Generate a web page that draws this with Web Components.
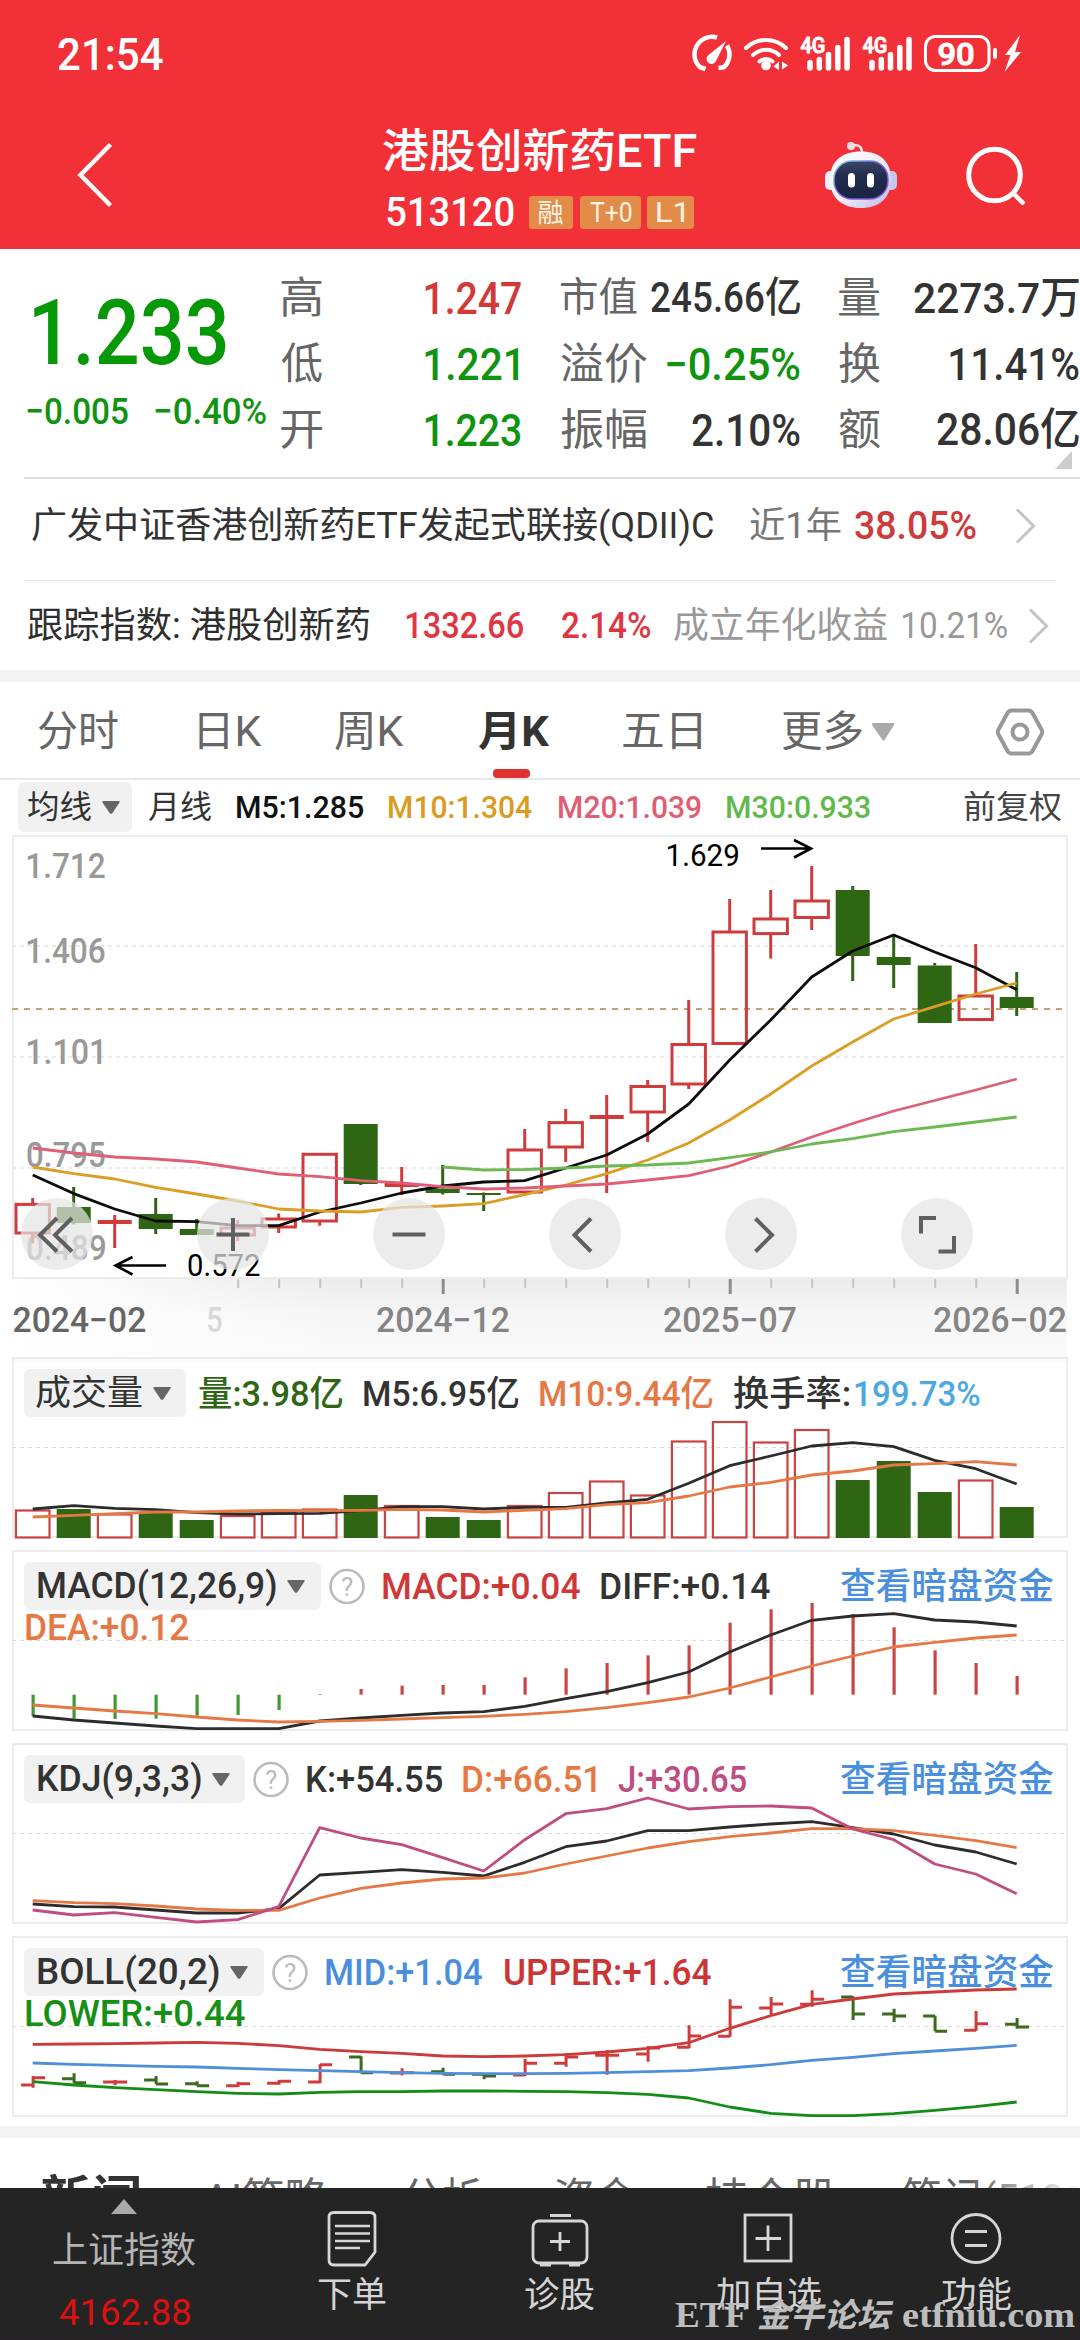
<!DOCTYPE html>
<html lang="zh-CN">
<head>
<meta charset="utf-8">
<title>港股创新药ETF 513120</title>
<style>
html,body{margin:0;padding:0;background:#fff}
body{width:1080px;height:2340px;overflow:hidden;font-family:Roboto,"Noto Sans CJK SC",sans-serif}
</style>
</head>
<body>
<quote-app></quote-app>
<script>
const FONT = 'Roboto,"Noto Sans CJK SC",sans-serif';
const ctx = document.createElement('canvas').getContext('2d');
function ink(text, size, weight, font = FONT) {
  ctx.font = `${weight} ${size}px ${font}`;
  const m = ctx.measureText(text);
  return { l: -m.actualBoundingBoxLeft, w: m.actualBoundingBoxLeft + m.actualBoundingBoxRight };
}
/* SVG text whose ink spans x..x+w, vertically centred on cy */
function label(text, x, w, cy, size, color, weight = 400) {
  const k = ink(text, size, weight), s = w / k.w;
  return `<text transform="translate(${x - k.l * s} ${cy + size * .355}) scale(${s} 1)" font-family='${FONT}' font-size="${size}" font-weight="${weight}" fill="${color}">${text}</text>`;
}
function define(name, html, extra) {
  customElements.define(name, class extends HTMLElement {
    constructor() {
      super();
      const t = document.createElement('template');
      t.innerHTML = html;
      this.attachShadow({ mode: 'open' }).append(t.content.cloneNode(true));
    }
    connectedCallback() { if (extra) extra(this, this.shadowRoot); }
  });
}

/* Text fitted to a given ink width: w, size s, weight b, colour c, left margin m */
define('fit-text', `<style>:host{display:block;flex:none;white-space:pre}span{display:inline-block;transform-origin:0 50%;white-space:pre}</style><span><slot></slot></span>`, (el, root) => {
  const a = n => el.getAttribute(n);
  const s = +a('s'), b = a('b') || 400, w = +a('w'), f = a('f') || FONT;
  const k = ink(el.textContent, s, b, f);
  const r = w / k.w;
  el.style.cssText += `;width:${w}px;height:${s}px;line-height:${s}px;font-size:${s}px;font-weight:${b};color:${a('c') || '#333'};margin-left:${a('m') || 0}px;font-family:${f}`;
  root.querySelector('span').style.transform = `translateX(${-k.l * r}px) scaleX(${r})`;
});

define('status-bar', `<style>:host{display:flex;height:108px;align-items:center}svg{margin-left:527px;display:block}</style>
<fit-text s="45" w="105" m="58" b="500" c="#fff">21:54</fit-text><svg width="340" height="108" viewBox="690 0 340 108" fill="none" stroke="#fff"></svg>`, (el, root) => {
  let h = `<path d="M701 68 A17.5 17.5 0 0 1 717 37.6M727 45.500 A17.5 17.5 0 0 1 723 68M699.500 67l6 2M724.500 67l-6 1" stroke-width="4.500"/><path d="M726 41l-9.500 19a5 5 0 1 1-8-5z" fill="#fff" stroke="none"/>
  <path d="M746 48a29 29 0 0 1 40 0M753 55a19 19 0 0 1 26 0M759.500 61.500a10 10 0 0 1 13 0" stroke-width="4" stroke-linecap="round"/><circle cx="766" cy="65.500" r="4.800" fill="#fff" stroke="none"/><path d="M779 61.500v8.500l-5.500-3.500zM782 61v9M782 61.500l6 4-6 4z" fill="#fff" stroke="none"/>`;
  for (const o of [0, 62]) {
    h += label('4G', 800.5 + o, 24, 45, 22, '#fff', 500);
    [[810, 60], [819.3, 57], [828.5, 52], [837.8, 45], [847, 37]].forEach(p => h += `<path d="M${p[0] + o} ${p[1] + 2.5}V68" stroke-width="5.500" stroke-linecap="round"/>`);
  }
  h += `<rect x="925.500" y="36.500" width="63.500" height="34" rx="10" stroke-width="3"/><rect x="993" y="48" width="4" height="11" rx="2" fill="#fff" stroke="none"/><path d="M1020 35l-15 20h5.500l-6 17 16.500-20h-6z" fill="#fff" stroke="none"/>` + label('90', 938.5, 35, 53.5, 32, '#fff', 500);
  root.querySelector('svg').innerHTML = h;
});

define('nav-tag', `<style>:host{display:flex;height:33px;align-items:center;justify-content:center;background:#e38b48;border-radius:3px}</style><slot></slot>`);

define('nav-header', `<style>:host{display:flex;height:133px;padding-bottom:8px;align-items:center}svg{display:block;flex:none}
.t{width:314px;margin-left:270px;align-self:flex-start;padding-top:20px}.c{display:flex;align-items:center;margin-top:18px}</style>
<svg style="margin-left:77px" width="36" height="66" viewBox="0 0 36 66"><path d="M33.500 2.500L3.500 33l30 30.500" fill="none" stroke="#fff" stroke-width="4.500"/></svg>
<div class="t"><fit-text s="46" w="314" b="500" c="#fff">港股创新药ETF</fit-text>
<div class="c"><fit-text s="41" w="127" m="4" b="500" c="#fff">513120</fit-text>
<nav-tag style="width:44px;margin-left:15px"><fit-text s="26" w="25" c="#fff4e6">融</fit-text></nav-tag>
<nav-tag style="width:61px;margin-left:7px"><fit-text s="28" w="42" c="#fff4e6">T+0</fit-text></nav-tag>
<nav-tag style="width:47px;margin-left:6px"><fit-text s="28" w="27" c="#fff4e6">L1</fit-text></nav-tag></div></div>
<svg style="margin-left:128px" width="72" height="68" viewBox="0 0 72 68"><defs><linearGradient id="g" x1="0" y1="0" x2="1" y2="1"><stop offset="0" stop-color="#fff"/><stop offset=".55" stop-color="#efecfb"/><stop offset="1" stop-color="#b9b5e6"/></linearGradient><linearGradient id="h" x1="0" y1="0" x2="0" y2="1"><stop offset="0" stop-color="#3a4668"/><stop offset=".4" stop-color="#222c4c"/><stop offset="1" stop-color="#1c2342"/></linearGradient><linearGradient id="r" x1="0" y1="0" x2="1" y2="1"><stop offset="0" stop-color="#8fd3ea"/><stop offset=".5" stop-color="#6d63d8"/><stop offset="1" stop-color="#8a55e0"/></linearGradient></defs>
<path d="M28 4.500c7-1 9 2 9 8" fill="none" stroke="#f7e3ea" stroke-width="2.600"/><circle cx="26" cy="5" r="4" fill="#f5dde6"/>
<rect x="0" y="30" width="12" height="19" rx="5" fill="#f2effc"/><rect x="60" y="30" width="12" height="19" rx="5" fill="#c9c6ee"/>
<path d="M36 10.500c19 0 30 10 30 28S55 67 36 67 5 57 5 38.500s12-28 31-28z" fill="url(#g)"/>
<rect x="9" y="20" width="54" height="38" rx="18" fill="url(#h)" stroke="url(#r)" stroke-width="1.500"/><rect x="23" y="32" width="7" height="14.500" rx="3.500" fill="#fff"/><rect x="42" y="32" width="7" height="14.500" rx="3.500" fill="#fff"/></svg>
<svg style="margin-left:69px" width="62" height="60" viewBox="0 0 62 60" fill="none" stroke="#fff" stroke-width="5"><circle cx="28.500" cy="30" r="25.800"/><path d="M47.500 48.500L58 59" stroke-width="4.500"/></svg>`);

define('stat-cell', `<style>:host{display:flex;flex:none;align-items:center;justify-content:space-between;height:66px}</style><slot></slot>`);

define('quote-board', `<style>:host{display:flex;height:228px;position:relative}
.l{width:281px;flex:none}.p{padding-top:40px}.d{display:flex;margin-top:14px}
.g{display:grid;grid-template-columns:240px 239px 240px;column-gap:39.500px;grid-auto-rows:66px;padding-top:16px}
svg{position:absolute;left:1055px;top:202px}</style>
<div class="l"><div class="p"><fit-text s="90" w="192" m="34" b="500" c="#069806">1.233</fit-text></div>
<div class="d"><fit-text s="37" w="101" m="27" c="#109310" b="500">−0.005</fit-text><fit-text s="37" w="111" m="27" c="#109310" b="500">−0.40%</fit-text></div></div>
<div class="g">
<stat-cell><fit-text s="43" w="41" c="#666">高</fit-text><fit-text s="45" w="96" c="#d23a3a" b="500">1.247</fit-text></stat-cell>
<stat-cell><fit-text s="40" w="76" c="#666">市值</fit-text><fit-text s="42" w="149" c="#333" b="500">245.66亿</fit-text></stat-cell>
<stat-cell><fit-text s="43" w="41" c="#666">量</fit-text><fit-text s="43" w="165" c="#333" b="500">2273.7万</fit-text></stat-cell>
<stat-cell><fit-text s="43" w="41" c="#666">低</fit-text><fit-text s="45" w="93" c="#109310" b="500" style="margin-right:3px">1.221</fit-text></stat-cell>
<stat-cell><fit-text s="43" w="86" c="#666">溢价</fit-text><fit-text s="45" w="133" c="#109310" b="500">−0.25%</fit-text></stat-cell>
<stat-cell><fit-text s="43" w="41" c="#666">换</fit-text><fit-text s="45" w="129" c="#333" b="500">11.41%</fit-text></stat-cell>
<stat-cell><fit-text s="43" w="41" c="#666">开</fit-text><fit-text s="45" w="96" c="#109310" b="500">1.223</fit-text></stat-cell>
<stat-cell><fit-text s="43" w="85" c="#666">振幅</fit-text><fit-text s="45" w="108" c="#333" b="500">2.10%</fit-text></stat-cell>
<stat-cell><fit-text s="43" w="41" c="#666">额</fit-text><fit-text s="44" w="142" c="#333" b="500">28.06亿</fit-text></stat-cell>
</div><svg width="17" height="18"><path d="M17 0v18H0z" fill="#ccc"/></svg>`);

define('row-chevron', `<style>:host{display:block;flex:none}svg{display:block}</style><svg width="21" height="36" viewBox="0 0 21 36"><path d="M2 1.500L18.500 18 2 34.500" fill="none" stroke="#c4c4c4" stroke-width="3"/></svg>`);

define('fund-rows', `<style>.a,.b{display:flex;align-items:center}.a{height:94px;padding-bottom:7px}.b{height:89px}.h{height:2px;margin-left:24px;background:#dedede}.i{margin-right:24px;height:1px;background:#e4e4e4}:host{display:block}.s{height:12px;background:#f4f4f4}</style>
<div class="h"></div>
<div class="a"><fit-text s="36" w="681" m="32">广发中证香港创新药ETF发起式联接(QDII)C</fit-text><fit-text s="36" w="91" m="37" c="#777">近1年</fit-text><fit-text s="38" w="121" m="14" c="#cf3a3a" b="500">38.05%</fit-text><row-chevron style="margin-left:39px"></row-chevron></div>
<div class="h i"></div>
<div class="b"><fit-text s="36" w="341" m="28" c="#2e2e2e">跟踪指数: 港股创新药</fit-text><fit-text s="36" w="117" m="37" c="#e03543" b="500">1332.66</fit-text><fit-text s="36" w="88" m="39" c="#e03543" b="500">2.14%</fit-text><fit-text s="36" w="213" m="24" c="#999">成立年化收益</fit-text><fit-text s="36" w="104" m="16" c="#999">10.21%</fit-text><row-chevron style="margin-left:21px"></row-chevron></div>
<div class="s"></div>`);

define('k-tabs', `<style>:host{display:flex;height:93px;padding-top:3px;align-items:center;border-bottom:2px solid #e8e8e8;position:relative}svg{display:block;flex:none}i{position:absolute;left:493px;top:87px;width:37px;height:9px;border-radius:4px;background:#e03131}</style>
<fit-text s="42" w="80" m="38" c="#666">分时</fit-text><fit-text s="42" w="63" m="81" c="#666">日K</fit-text><fit-text s="42" w="69" m="73" c="#666">周K</fit-text><fit-text s="42" w="71" m="74" b="700" c="#333">月K</fit-text><fit-text s="42" w="78" m="74" c="#666">五日</fit-text><fit-text s="42" w="80" m="81" c="#666">更多</fit-text>
<svg style="margin-left:10px" width="23" height="18"><path d="M2 0h19q2 0 1 2L12.500 17q-1 1.500-2 0L0 2q-1-2 2-2z" fill="#aaa"/></svg>
<svg style="margin-left:100px" width="52" height="50" viewBox="0 0 52 50" fill="none" stroke="#999" stroke-width="4"><path d="M16.500 3.500h17q2.500 0 4 2.500l9 16.500q1.400 2.500 0 5l-9 16.500q-1.500 2.500-4 2.500h-17q-2.500 0-4-2.500l-9-16.500q-1.400-2.500 0-5l9-16.500q1.500-2.500 4-2.500z"/><circle cx="25" cy="25" r="7.500"/></svg><i></i>`);

define('drop-pill', `<style>:host{display:flex;flex:none;box-sizing:border-box;background:#f1f1f1;border-radius:6px;align-items:center;height:48px}svg{display:block;margin-left:11px}</style><slot></slot><svg width="18" height="13"><path d="M1.500 0h15q2 0 .8 1.700L10.500 12q-1.500 1.700-3 0L.7 1.700Q-.5 0 1.500 0z" fill="#666"/></svg>`);

define('ma-legend', `<style>:host{display:flex;height:54px;align-items:center}drop-pill{width:114px;height:50px;margin-left:18px;padding-left:10px}</style>
<drop-pill><fit-text s="32" w="63">均线</fit-text></drop-pill><fit-text s="32" w="63" m="16">月线</fit-text>
<fit-text s="32" w="126" m="26" b="500" c="#111">M5:1.285</fit-text><fit-text s="32" w="143" m="26" b="500" c="#da9b20">M10:1.304</fit-text><fit-text s="32" w="142" m="27" b="500" c="#e25c74">M20:1.039</fit-text><fit-text s="32" w="143" m="26" b="500" c="#62b94b">M30:0.933</fit-text><fit-text s="32" w="97" m="94" c="#444">前复权</fit-text>`);

const cx = i => 32.7 + 41 * i, RED = '#d03c3c', GREEN = '#2f6614';
const line = (v, c, w = 2.8, from = 0, f = y => y) => `<polyline fill="none" stroke="${c}" stroke-width="${w}" stroke-linejoin="round" points="${v.map((y, i) => cx(i + from).toFixed(1) + ',' + f(y).toFixed(1)).join(' ')}"/>`;

define('k-button', `<style>:host{display:block;width:72px;height:72px;border-radius:50%;background:rgba(229,229,229,.72)}svg{display:block}</style><svg width="72" height="72" fill="none" stroke="#606060" stroke-width="4"></svg>`, (el, root) => {
  root.querySelector('svg').innerHTML = `<path d="${{
    first: 'M36 20L19 37l17 16.500M51 20L34 37l17 16.500', plus: 'M36 20v33M19.500 36.500h33', minus: 'M19.500 36.500h33',
    prev: 'M42 20.500L25.500 37 42 53.500', next: 'M30.500 20.500L47 37 30.500 53.500', full: 'M35 20H20v15.500M53 38v15.500H37.500' }[el.getAttribute('kind')]}"/>`;
});

define('k-chart', `<style>:host{display:grid;height:523px}svg,.b{grid-area:1/1}svg{display:block}.b{display:flex;gap:104px;padding:364px 0 0 21px}</style>
<svg width="1080" height="523" viewBox="0 834 1080 523"></svg><div class="b"><k-button kind="first"></k-button><k-button kind="plus"></k-button><k-button kind="minus"></k-button><k-button kind="prev"></k-button><k-button kind="next"></k-button><k-button kind="full"></k-button></div>`, (el, root) => {
  let h = `<defs><linearGradient id="v" x1="0" y1="0" x2="0" y2="1"><stop offset="0" stop-color="#ebebeb"/><stop offset=".45" stop-color="#f6f6f6"/><stop offset="1" stop-color="#fafafa"/></linearGradient><linearGradient id="f" x1="0" y1="0" x2="1" y2="0"><stop offset="0" stop-color="#fff"/><stop offset="1" stop-color="#fff" stop-opacity="0"/></linearGradient></defs>
  <rect x="13" y="1279" width="1054" height="78" fill="url(#v)"/><rect x="12" y="1279" width="330" height="78" fill="url(#f)"/>
  <rect x="13" y="836" width="1054" height="442" fill="#fff" stroke="#ececec" stroke-width="2"/>`;
  for (const y of [946, 1057, 1168]) h += `<path d="M12 ${y}H1066" stroke="#ebebeb" stroke-width="2" stroke-dasharray="4 4"/>`;
  [['1.712', 865.5], ['1.406', 951], ['1.101', 1052], ['0.795', 1155], ['0.489', 1248]].forEach(l => h += label(l[0], 27, l[0] == '1.101' ? 75 : 78, l[1], 35, '#999', 500));
  h += `<path d="M12 1009H1066" stroke="#bfa575" stroke-width="2" stroke-dasharray="6 6"/>`;
  /* colour, high, body top, body bottom, low */
  const K = [['r',1198,1204.4,1233,1243.5],['g',1187,1207,1223,1224.6],['r',1215,1222,1222,1248],['g',1198,1214,1229,1234],['g',1219,1229,1235,1235],['r',1220,1228,1235,1241],['r',1213.5,1219,1227,1233],['r',1154,1154.3,1221,1225.7],['g',1124,1124,1184,1185],['r',1167,1185,1185,1195],['g',1165,1188.5,1193,1194.6],['g',1192.5,1193,1195,1211],['r',1129,1150,1192,1194.6],['r',1109,1122.6,1147,1162],['r',1095,1117,1117,1193],['r',1080,1086.5,1112,1142],['r',1000,1044.5,1084,1089],['r',899,932,1043.5,1043.5],['r',890,919,933.6,958.6],['r',866,901,917.5,930],['g',886,890,956,981],['g',935,957,965,988],['g',963,965.5,1023,1023],['r',944,996,1019.5,1019.5],['g',972,997,1008,1016]];
  K.forEach(([c, hi, t, b, lo], i) => {
    const x = cx(i), col = c == 'r' ? RED : GREEN;
    h += `<path d="M${x} ${hi}V${t}M${x} ${b}V${lo}" stroke="${col}" stroke-width="3"/>`;
    h += c == 'g' ? `<rect x="${x - 17}" y="${t}" width="34" height="${b - t}" fill="${col}"/>` : t == b ? `<path d="M${x - 17} ${t}h34" stroke="${col}" stroke-width="4"/>` : `<rect x="${x - 16.7}" y="${t}" width="33.400" height="${b - t}" fill="none" stroke="${col}" stroke-width="3"/>`;
  });
  h += line([1175,1193.6,1209,1221,1221.6,1225.7,1225.7,1212,1203,1193,1186,1182,1180.7,1168,1155,1134,1104,1060,1020,977,951,935,952,967.7,989.7], '#0c0c0c');
  h += line([1167,1173.6,1179,1187.4,1194,1201,1209,1211,1212,1207.4,1206,1203.7,1194.6,1185,1173.6,1160,1143,1120,1094,1066,1042,1019,1006.6,994,983], '#dc9d24');
  h += line([1148,1153,1157,1159,1162,1168,1174,1176.6,1180.7,1183,1186.7,1189,1188,1186,1184,1180,1175.6,1166,1152,1137,1123.5,1111,1100.5,1090,1079], '#de5f76');
  h += line([1167,1170,1169.5,1168,1166,1165,1163,1157.7,1152,1144,1138.7,1131.6,1127,1122,1117], '#6cb852', 2.8, 10);
  h += label('1.629', 667.5, 71, 855, 31, '#000') + `<path d="M761 848.500H810M794 840l17 8.500-17 9" fill="none" stroke="#000" stroke-width="2.600"/>`;
  h += label('0.572', 188, 72, 1265, 31, '#000') + `<path d="M166 1265.500H116M132.500 1257l-17 8.500 17 9" fill="none" stroke="#000" stroke-width="2.600"/>`;
  for (let i = 5; i < 25; i++) { const M = (i - 10) % 7 == 0; h += `<path d="M${cx(i) + .5} 1279V${M ? 1294 : 1288}" stroke="${M ? '#8c8c8c' : '#c4c4c4'}" stroke-width="${M ? 3 : 2}"/>`; }
  h += label('2024−02', 13.5, 132, 1319.5, 35, '#666', 500) + label('5', 208, 14, 1319.5, 35, '#d8d8d8', 500) + label('2024−12', 377, 132, 1319.5, 35, '#858585', 500) + label('2025−07', 664, 132, 1319.5, 35, '#858585', 500) + label('2026−02', 934, 132, 1319.5, 35, '#858585', 500);
  root.querySelector('svg').innerHTML = h;
});

define('help-dot', `<style>:host{display:block;flex:none}svg{display:block}</style><svg width="36" height="37"></svg>`, (el, root) => {
  root.querySelector('svg').innerHTML = `<circle cx="18" cy="18.500" r="16.500" fill="none" stroke="#bbb" stroke-width="2.600"/>` + label('?', 12, 12, 18.5, 26, '#bbb');
});

/* Frame shared by the four indicator charts; the legend is slotted over the plot */
define('indicator-panel', `<style>:host{display:grid;height:182px;margin-bottom:11px}svg,.o{grid-area:1/1}svg{display:block}.o{padding-top:12px}.l{display:flex;height:48px;align-items:center;padding-left:24px}.n{margin-top:-1px;padding-left:26px}::slotted(fit-text){position:relative;top:1px}</style><svg width="1080" height="183"></svg><div class="o"><div class="l"><slot></slot></div><div class="n"><slot name="next"></slot></div></div>`, (el, root) => {
  const kind = el.getAttribute('kind'), top = { vol: 1357, macd: 1550, kdj: 1743, boll: 1936 }[kind];
  const off = kind == 'vol' || kind == 'macd' ? 1340 : 1730, f = v => off + v / 3;
  const svg = root.querySelector('svg');
  svg.setAttribute('viewBox', `0 ${top} 1080 183`);
  let h = (kind == 'vol' ? `<rect x="13" y="1357" width="1054" height="6" fill="#fafafa"/>` : '') + `<rect x="13" y="${top + 1}" width="1054" height="179" fill="none" stroke="#ececec" stroke-width="2"/><path d="M12 ${top + 90.5}H1066" stroke="#dcdcdc" stroke-width="1" stroke-dasharray="4 4"/>`;
  const ln = (v, c) => line(v, c, 2.8, 0, f);
  if (kind == 'vol') {
    'RGRGGRRRGRGGRRRRRRRRGGGRG'.split('').forEach((c, i) => {
      const y = [1510.5,1509,1514.5,1513,1520,1516,1512,1509.5,1495,1506,1517,1520,1506,1493,1481.5,1495.5,1441.5,1422,1442.5,1430,1480,1461,1492,1480.500,1507][i];
      h += c == 'G' ? `<rect x="${cx(i) - 17}" y="${y}" width="34" height="${1538 - y}" fill="${GREEN}"/>` : `<rect x="${cx(i) - 16.8}" y="${y}" width="33.600" height="${1537.5 - y}" fill="none" stroke="#c94444" stroke-width="2.200"/>`;
    });
    h += ln([507,497,505,509,518,522,521,520,512,500,500,507,502,502,489,478,430,377,348,318,308,320,361,386,432], '#2c2c2c') + ln([531,526,521,516,516,513,511,512,511,508,510,516,511,506,494,488,468,441,427,405,393,375,371,365,375], '#e67845');
  } else if (kind == 'macd') {
    [1128,1136,1137,1136,1127,1125,1110,1062,1047,1037,1035,1035,1012,985,969,946,916,848,808,789,822,862,931,969,1008].forEach((v, i) => h += `<path d="M${cx(i) + .4} ${f(1064)}V${f(v)}" stroke="${i < 7 ? '#3f9a30' : '#c94444'}" stroke-width="3.200"/>`);
    h += ln([1128,1140,1149,1158,1166,1166,1166,1143,1134,1126,1119,1115,1099,1076,1055,1028,996,936,885,841,828,821,840,846,858], '#2c2c2c') + ln([1095,1104,1113,1121,1131,1140,1146,1144,1141,1137,1133,1129,1123,1115,1103,1088,1071,1044,1011,978,948,921,907,894,885], '#e67845');
  } else if (kind == 'kdj') {
    h += ln([522,530,531,540,549,549,536,435,427,419,427,438,397,350,333,302,302,291,282,275,293,312,345,366,402], '#2c2c2c') + ln([512,518,521,528,537,541,541,504,475,459,447,444,429,402,378,354,335,320,309,296,296,302,316,332,353], '#e67845') + ln([540,555,548,562,576,569,530,293,324,344,383,423,329,251,236,204,237,230,228,234,297,329,402,432,491], '#c04c80');
  } else {
    /* open, high, low, close */
    [[1065,1038,1073,1043],[1046,1030,1060,1058],[1056,1050,1066,1056],[1050,1038,1063,1062],[1061,1054,1067,1067],[1067,1055,1071,1061],[1060,1050,1064,1054],[1056,1003,1060,1004],[981,979,1030,1028],[1029,1015,1036,1028],[1025,1013,1035,1033],[1033,1033,1048,1038],[1035,987,1038,1000],[1000,970,1010,981],[976,960,1034,976],[972,948,995,954],[952,886,955,918],[919,808,920,832],[834,801,852,822],[823,781,830,808],[801,799,870,852],[852,836,876,858],[858,857,904,904],[901,843,902,881],[883,864,896,891]].forEach(([o, hi, lo, c], i) => {
      const x = cx(i) + .4, g = 'RGRGGRRRGRGGRRRRRRRRGGGRG'[i] == 'G';
      h += `<path d="M${x - 12} ${f(o)}H${x}M${x} ${f(hi)}V${f(lo)}M${x} ${f(c)}h12" stroke="${g ? '#3a6b1e' : RED}" stroke-width="3"/>`;
    });
    h += ln([943,942,941,939,937,940,947,958,965,970,978,980,978,974,966,955,938,895,857,823,807,792,786,780,777], '#cc3a3a') + ln([999,1003,1006,1009,1011,1015,1019,1022,1025,1028,1030,1031,1031,1030,1028,1025,1022,1014,1004,991,982,971,963,955,946], '#4f8fd8') + ln([1055,1065,1073,1079,1085,1090,1092,1087,1085,1085,1083,1083,1084,1085,1088,1093,1104,1131,1150,1157,1157,1151,1141,1130,1116], '#158c15');
  }
  svg.innerHTML = h;
});

define('news-tabs', `<style>:host{display:block;border-top:12px solid #f4f4f4;margin-top:-3px}.r{height:50px;overflow:hidden;position:relative}.f{display:flex;align-items:center;padding-top:36px;height:50px}.m{position:absolute;right:0;top:0;width:110px;height:50px;background:linear-gradient(90deg,rgba(255,255,255,0),#fff)}</style>
<div class="r"><div class="f"><fit-text s="48" w="98" m="41" b="700">新闻</fit-text><fit-text s="43" w="124" m="64" c="#666">AI策略</fit-text><fit-text s="43" w="80" m="75" c="#666">分析</fit-text><fit-text s="43" w="81" m="73" c="#666">资金</fit-text><fit-text s="43" w="130" m="70" c="#666">持仓股</fit-text><fit-text s="43" w="240" m="67" c="#666">笔记(513120)</fit-text></div><div class="m"></div></div>`);

define('bar-item', `<style>:host{display:flex;flex-direction:column;align-items:center;flex:none;padding-top:20px;gap:10px}svg{display:block}</style><svg width="60" height="60" fill="none" stroke="#d6d6d6" stroke-width="2.800"></svg><slot></slot>`, (el, root) => {
  root.querySelector('svg').innerHTML = {
    order: '<path d="M12 4.500h36q5 0 5 5V44l-10 13H12q-5 0-5-5V9.500q0-5 5-5z"/><path d="M13 18h35M13 25.500h35M13 33h35M13 40h25" stroke-width="2.600"/>',
    check: '<rect x="3" y="13" width="54" height="42" rx="6"/><path d="M20 7.500h21M10 57h11M39 57h11M30 24v19M20 33.500h20"/>',
    add: '<rect x="7" y="7" width="46" height="46"/><path d="M30 17.500v25.500M17.500 30.500h25.500"/>',
    more: '<circle cx="30" cy="30.500" r="24"/><path d="M19 23.500h22M19 37.500h22"/>' }[el.getAttribute('icon')];
});

define('bottom-bar', `<style>:host{display:flex;height:151px;background:#242424;border-bottom:2px solid #2b1f27;position:relative}.i{width:248px;display:flex;flex-direction:column;align-items:center}.i svg{margin-top:11px}
.w{position:absolute;left:675px;top:109px;display:flex;align-items:center;height:36px}</style>
<div class="i"><svg width="26" height="15"><path d="M13 0l13 15H0z" fill="#aaa"/></svg><fit-text style="margin-top:19px" s="36" w="142" c="#b4b4b4">上证指数</fit-text><fit-text style="margin-top:25px" s="37" w="131" c="#dc1010">4162.88</fit-text></div>
<bar-item icon="order" style="width:208px"><fit-text s="35" w="68" c="#d4d4d4">下单</fit-text></bar-item>
<bar-item icon="check" style="width:207px"><fit-text s="35" w="69" c="#d4d4d4">诊股</fit-text></bar-item>
<bar-item icon="add" style="width:210px"><fit-text s="35" w="105" c="#d4d4d4">加自选</fit-text></bar-item>
<bar-item icon="more" style="width:206px"><fit-text s="35" w="69" c="#d4d4d4">功能</fit-text></bar-item>
<div class="w"><fit-text s="35" w="71" c="#bdbdbd" b="700" f="Liberation Serif">ETF</fit-text><fit-text s="33" w="133" m="11" b="700" c="#bdbdbd" style="font-style:italic">金牛论坛</fit-text><fit-text s="35" w="172" m="13" c="#bdbdbd" b="700" f="Liberation Serif">etfniu.com</fit-text></div>`);

define('quote-app', `<style>:host{display:flex;flex-direction:column;width:1080px;height:2340px;overflow:hidden;background:#fff}:host>*{flex:none}header{background:#f13038;height:249px;flex:none}</style>
<header><status-bar></status-bar><nav-header></nav-header></header>
<quote-board></quote-board><fund-rows></fund-rows><k-tabs></k-tabs><ma-legend></ma-legend><k-chart></k-chart>
<indicator-panel kind="vol"><drop-pill style="width:162px;padding-left:12px"><fit-text s="35" w="106">成交量</fit-text></drop-pill><fit-text s="35" w="144" m="13" b="500" c="#2f6614">量:3.98亿</fit-text><fit-text s="35" w="155" m="21" b="500">M5:6.95亿</fit-text><fit-text s="35" w="173" m="21" b="500" c="#e67845">M10:9.44亿</fit-text><fit-text s="35" w="115" m="21" b="500">换手率:</fit-text><fit-text s="35" w="125" m="6" b="500" c="#4aa9e2">199.73%</fit-text></indicator-panel>
<indicator-panel kind="macd"><drop-pill style="width:297px;padding-left:14px"><fit-text s="36" w="238" b="500">MACD(12,26,9)</fit-text></drop-pill><help-dot style="margin-left:8px"></help-dot><fit-text s="36" w="197" m="18" b="500" c="#d03838">MACD:+0.04</fit-text><fit-text s="36" w="169" m="21" b="500">DIFF:+0.14</fit-text><fit-text s="36" w="213" m="71" b="500" c="#4a8fdd">查看暗盘资金</fit-text><fit-text slot="next" s="36" w="163" b="500" c="#e67845">DEA:+0.12</fit-text></indicator-panel>
<indicator-panel kind="kdj"><drop-pill style="width:221px;padding-left:14px"><fit-text s="36" w="163" b="500">KDJ(9,3,3)</fit-text></drop-pill><help-dot style="margin-left:8px"></help-dot><fit-text s="36" w="135" m="18" b="500">K:+54.55</fit-text><fit-text s="36" w="133" m="21" b="500" c="#e67845">D:+66.51</fit-text><fit-text s="36" w="128" m="22" b="500" c="#c04c80">J:+30.65</fit-text><fit-text s="36" w="213" m="95" b="500" c="#4a8fdd">查看暗盘资金</fit-text></indicator-panel>
<indicator-panel kind="boll"><drop-pill style="width:240px;padding-left:14px"><fit-text s="36" w="181" b="500">BOLL(20,2)</fit-text></drop-pill><help-dot style="margin-left:8px"></help-dot><fit-text s="36" w="156" m="18" b="500" c="#4a8fdd">MID:+1.04</fit-text><fit-text s="36" w="206" m="23" b="500" c="#cc3535">UPPER:+1.64</fit-text><fit-text s="36" w="213" m="130" b="500" c="#4a8fdd">查看暗盘资金</fit-text><fit-text slot="next" s="36" w="219" b="500" c="#159015">LOWER:+0.44</fit-text></indicator-panel>
<news-tabs></news-tabs><bottom-bar></bottom-bar>`);
</script>
</body>
</html>
